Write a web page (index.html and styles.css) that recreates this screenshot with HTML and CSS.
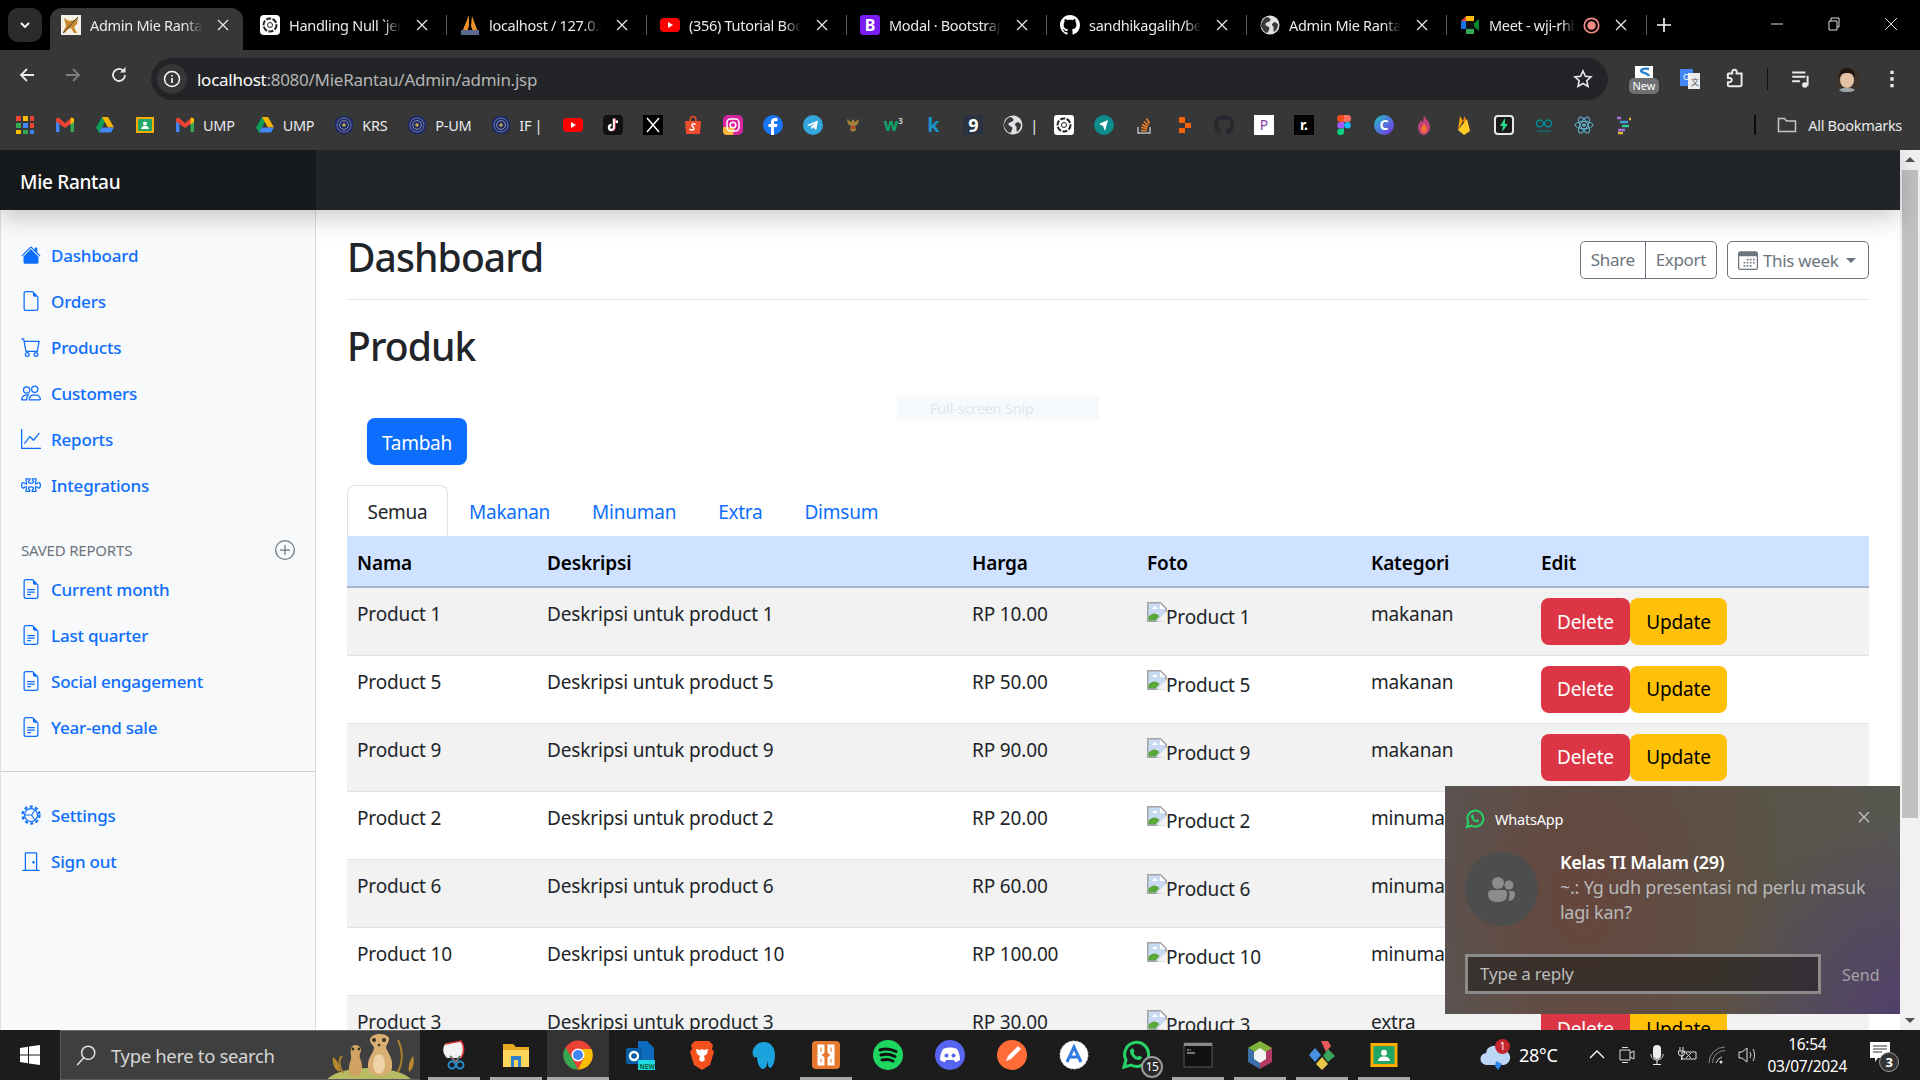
FILE: index.html
```html
<!DOCTYPE html>
<html>
  <head>
    <meta name="viewport" content="width=device-width, initial-scale=1.0">
    <title>Admin Mie Rantau</title>
    <link rel="stylesheet" href="styles.css">
  </head>
  <body>
    <svg class="defs">
      <symbol id="i-house" viewBox="0 0 16 16"><path d="M8.707 1.5a1 1 0 0 0-1.414 0L.646 8.146a.5.5 0 0 0 .708.708L8 2.207l6.646 6.647a.5.5 0 0 0 .708-.708L13 5.793V2.5a.5.5 0 0 0-.5-.5h-1a.5.5 0 0 0-.5.5v1.293L8.707 1.5Z"/><path d="m8 3.293 6 6V13.5a1.5 1.5 0 0 1-1.5 1.5h-9A1.5 1.5 0 0 1 2 13.5V9.293l6-6Z"/></symbol>
      <symbol id="i-file" viewBox="0 0 16 16"><path d="M14 4.5V14a2 2 0 0 1-2 2H4a2 2 0 0 1-2-2V2a2 2 0 0 1 2-2h5.5L14 4.5zm-3 0A1.5 1.5 0 0 1 9.5 3V1H4a1 1 0 0 0-1 1v12a1 1 0 0 0 1 1h8a1 1 0 0 0 1-1V4.5h-2z"/></symbol>
      <symbol id="i-cart" viewBox="0 0 16 16"><path d="M0 1.5A.5.5 0 0 1 .5 1H2a.5.5 0 0 1 .485.379L2.89 3H14.5a.5.5 0 0 1 .491.592l-1.5 8A.5.5 0 0 1 13 12H4a.5.5 0 0 1-.491-.408L2.01 3.607 1.61 2H.5a.5.5 0 0 1-.5-.5zM3.102 4l1.313 7h8.17l1.313-7H3.102zM5 12a2 2 0 1 0 0 4 2 2 0 0 0 0-4zm7 0a2 2 0 1 0 0 4 2 2 0 0 0 0-4zm-7 1a1 1 0 1 1 0 2 1 1 0 0 1 0-2zm7 0a1 1 0 1 1 0 2 1 1 0 0 1 0-2z"/></symbol>
      <symbol id="i-people" viewBox="0 0 16 16"><path d="M15 14s1 0 1-1-1-4-5-4-5 3-5 4 1 1 1 1h8Zm-7.978-1A.261.261 0 0 1 7 12.996c.001-.264.167-1.03.76-1.72C8.312 10.629 9.282 10 11 10c1.717 0 2.687.63 3.24 1.276.593.69.758 1.457.76 1.72l-.008.002a.274.274 0 0 1-.014.002H7.022ZM11 7a2 2 0 1 0 0-4 2 2 0 0 0 0 4Zm3-2a3 3 0 1 1-6 0 3 3 0 0 1 6 0ZM6.936 9.28a5.88 5.88 0 0 0-1.23-.247A7.35 7.35 0 0 0 5 9c-4 0-5 3-5 4 0 .667.333 1 1 1h4.216A2.238 2.238 0 0 1 5 13c0-1.01.377-2.042 1.09-2.904.243-.294.526-.569.846-.816ZM4.92 10A5.493 5.493 0 0 0 4 13H1c0-.26.164-1.03.76-1.724.545-.636 1.492-1.256 3.16-1.275ZM1.5 5.5a3 3 0 1 1 6 0 3 3 0 0 1-6 0Zm3-2a2 2 0 1 0 0 4 2 2 0 0 0 0-4Z"/></symbol>
      <symbol id="i-graph" viewBox="0 0 16 16"><path d="M0 0h1v15h15v1H0V0Zm14.817 3.113a.5.5 0 0 1 .07.704l-4.5 5.5a.5.5 0 0 1-.74.037L7.06 6.767l-3.656 5.027a.5.5 0 0 1-.808-.588l4-5.5a.5.5 0 0 1 .758-.06l2.609 2.61 4.15-5.073a.5.5 0 0 1 .704-.07Z"/></symbol>
      <symbol id="i-puzzle" viewBox="0 0 16 16"><path fill="none" stroke="currentColor" stroke-width="1" d="M4 3h3v.6c0 .9-1 1-1 1.700 0 .7 1 1.200 2 1.200s2-.5 2-1.200c0-.7-1-.8-1-1.700V3h3l-.4 4h.9c.7 0 .9-1 1.700-1 .8 0 1.300 1 1.300 2.200s-.5 2.200-1.300 2.200c-.8 0-1-1-1.700-1h-.9l.4 3.600H9v-.6c0-.9 1-1 1-1.700 0-.7-1-1.200-2-1.200s-2 .5-2 1.200c0 .7 1 .8 1 1.700v.6H4l.4-3.600h-.9c-.7 0-.9 1-1.700 1-.8 0-1.300-1-1.300-2.200S1 6 1.800 6c.8 0 1 1 1.700 1h.9L4 3Z"/></symbol>
      <symbol id="i-filetext" viewBox="0 0 16 16"><path d="M5 8h6v1H5zM5 10h6v1H5zM5 12h3v1H5z"/><path d="M14 4.5V14a2 2 0 0 1-2 2H4a2 2 0 0 1-2-2V2a2 2 0 0 1 2-2h5.5L14 4.5zm-3 0A1.5 1.5 0 0 1 9.5 3V1H4a1 1 0 0 0-1 1v12a1 1 0 0 0 1 1h8a1 1 0 0 0 1-1V4.5h-2z"/></symbol>
      <symbol id="i-gear" viewBox="0 0 16 16"><circle cx="8" cy="8" r="6.800" fill="none" stroke="currentColor" stroke-width="1.800" stroke-dasharray="2.400 2"/><circle cx="8" cy="8" r="5.200" fill="none" stroke="currentColor" stroke-width="1"/><path fill="none" stroke="currentColor" stroke-width=".9" d="M3 8h5.500L11 4.200M8.500 8l2.500 3.800"/></symbol>
      <symbol id="i-door" viewBox="0 0 16 16"><path d="M3 2a1 1 0 0 1 1-1h8a1 1 0 0 1 1 1v13h1.5a.5.5 0 0 1 0 1h-13a.5.5 0 0 1 0-1H3V2zm1 13h8V2H4v13z"/><path d="M9 9a1 1 0 1 0 2 0 1 1 0 0 0-2 0z"/></symbol>
      <symbol id="i-seal" viewBox="0 0 20 20"><circle cx="10" cy="10" r="9.500" fill="#1d2a63"/><circle cx="10" cy="10" r="7" fill="none" stroke="#6d76a8" stroke-width="1"/><circle cx="10" cy="10" r="4.400" fill="none" stroke="#8d90b0" stroke-width="1"/><circle cx="10" cy="10" r="1.800" fill="#c5a94a"/></symbol>
      <symbol id="i-gmail" viewBox="0 0 20 20"><path fill="#4285f4" d="M1 5v12h3.500V9z"/><path fill="#34a853" d="M15.500 9v8H19V5z"/><path fill="#ea4335" d="M1 3.500v3l9 6.500 9-6.500v-3l-2.500-1L10 8 3.500 2.500z"/><path fill="#fbbc04" d="M16.500 2.500 19 3.500V7l-3.500 2.500V4z"/></symbol>
      <symbol id="i-drive" viewBox="0 0 20 20"><path fill="#0f9d58" d="M7 2 1 12.500l3 5L10 7z"/><path fill="#f4b400" d="M7 2h6l6 10.500h-6z"/><path fill="#4285f4" d="M6.500 12.500H19l-3 5H4z"/></symbol>
      <symbol id="i-classroom" viewBox="0 0 20 20"><rect x="1" y="2" width="18" height="16" fill="#f9ab00"/><rect x="3" y="4" width="14" height="12" fill="#22a565"/><circle cx="10" cy="8.500" r="2" fill="#fff"/><path fill="#fff" d="M6 14c.5-2.500 2-3 4-3s3.500.5 4 3z"/></symbol>
      <symbol id="i-yt" viewBox="0 0 20 20"><rect y="3" width="20" height="14" rx="4" fill="#f00"/><path fill="#fff" d="m8 7 5 3-5 3z"/></symbol>
      <symbol id="i-globe" viewBox="0 0 20 20"><circle cx="10" cy="10" r="9.500" fill="#dfe1e5"/><path fill="#3a3a3a" d="M7 2c3 1 4 2 3 4-1 1-3 1-4 2-2 2 1 3 3 4 1 1 0 4-2 6-3-1-5-4-6-7 0-4 3-8 6-9zm8 5 3 2c0 3-1 6-4 8-1-3 0-5-1-6-2-1-1-3 2-4z"/></symbol>
      <symbol id="i-x" viewBox="0 0 14 14"><path stroke="currentColor" stroke-width="1.300" d="m2 2 10 10M12 2 2 12"/></symbol>
      <symbol id="i-broken" viewBox="0 0 20 20"><path fill="#c9daf3" stroke="#a3a3a3" stroke-width="1.500" d="M.8.800h12.600l5.800 5.800v12.600H.8z"/><path fill="#fff" d="M13 1.500V7h5.500z"/><path fill="#fff" d="M5 7l3-3 3 3z"/><path fill="#5aa83a" d="M1.500 18.500V15c3-4 7-5 11-1l-4 4.500z"/><path fill="#f2f2f2" d="M9.500 19.500 20 9v11z"/></symbol>
    </svg>

    <div class="shell">
      <!-- browser -->
      <div class="tabstrip">
        <div class="tab-menu"><svg class="ico14" viewBox="0 0 14 14"><path fill="none" stroke="#fff" stroke-width="1.800" d="m3 5 4 4 4-4"/></svg></div>
        <div class="tab active">
          <svg class="favicon" viewBox="0 0 20 20"><rect width="20" height="20" fill="#f4f1e4"/><path fill="#c98a2e" d="M3 3l5 3 5-1 4-2-1 6-3 3 3 6h-3l-3-5-4 2-2 3-2-1 3-6z"/><path stroke="#444" d="M2 18 17 2"/></svg>
          <span class="tab-title">Admin Mie Rantau</span>
          <svg class="ico14 tab-x"><use href="#i-x"/></svg>
        </div>
        <div class="tab">
          <svg class="favicon" viewBox="0 0 20 20"><rect width="20" height="20" rx="4" fill="#fff"/><circle cx="10" cy="10" r="6.500" fill="none" stroke="#222" stroke-width="2" stroke-dasharray="5 1.500"/><circle cx="10" cy="10" r="2.500" fill="none" stroke="#222"/></svg>
          <span class="tab-title">Handling Null `jenis</span>
          <svg class="ico14 tab-x"><use href="#i-x"/></svg>
        </div>
        <div class="tab">
          <svg class="favicon" viewBox="0 0 20 20"><path fill="#e8912d" d="M9 0 2 17h5l2-6zM12 1l-1 10 2 6h5z"/><rect x="1" y="15" width="18" height="5" fill="#5a6a8c"/></svg>
          <span class="tab-title">localhost / 127.0.0.1</span>
          <svg class="ico14 tab-x"><use href="#i-x"/></svg>
        </div>
        <div class="tab">
          <svg class="favicon"><use href="#i-yt"/></svg>
          <span class="tab-title">(356) Tutorial Boots</span>
          <svg class="ico14 tab-x"><use href="#i-x"/></svg>
        </div>
        <div class="tab">
          <span class="favicon letter-b">B</span>
          <span class="tab-title">Modal · Bootstrap</span>
          <svg class="ico14 tab-x"><use href="#i-x"/></svg>
        </div>
        <div class="tab">
          <svg class="favicon" viewBox="0 0 16 16"><path fill="#fff" d="M8 0C3.580 0 0 3.580 0 8c0 3.540 2.290 6.530 5.470 7.590.4.070.55-.17.55-.38 0-.19-.01-.82-.01-1.490-2.010.37-2.530-.49-2.690-.94-.09-.23-.48-.94-.82-1.130-.28-.15-.68-.52-.01-.53.63-.01 1.080.58 1.230.82.720 1.210 1.870.87 2.330.66.070-.52.280-.87.510-1.070-1.780-.2-3.640-.89-3.640-3.950 0-.87.310-1.590.820-2.150-.080-.2-.360-1.020.080-2.120 0 0 .670-.210 2.200.820.640-.180 1.320-.270 2-.270s1.360.090 2 .270c1.530-1.040 2.200-.820 2.200-.820.440 1.100.160 1.920.080 2.120.510.560.820 1.270.820 2.150 0 3.070-1.870 3.750-3.650 3.950.290.250.540.730.540 1.480 0 1.070-.010 1.930-.010 2.200 0 .210.150.460.550.380A8.010 8.010 0 0 0 16 8c0-4.420-3.580-8-8-8z"/></svg>
          <span class="tab-title">sandhikagalih/belajar</span>
          <svg class="ico14 tab-x"><use href="#i-x"/></svg>
        </div>
        <div class="tab">
          <svg class="favicon"><use href="#i-globe"/></svg>
          <span class="tab-title">Admin Mie Rantau</span>
          <svg class="ico14 tab-x"><use href="#i-x"/></svg>
        </div>
        <div class="tab tab-last">
          <svg class="favicon" viewBox="0 0 20 20"><path fill="#fbbc04" d="M1 6h5V1h8v5H1z"/><path fill="#1a73e8" d="M1 6h5v8H1z"/><path fill="#34a853" d="M6 14h8v5H6z"/><path fill="#ea4335" d="M6 1v5H1z"/><path fill="#111" d="M6 6h8v8H6z"/><path fill="#00832d" d="m14 8 5-4v12l-5-4z"/></svg>
          <span class="tab-title tab-short">Meet - wji-rhbx</span>
          <svg class="rec" viewBox="0 0 20 20"><circle cx="10" cy="10" r="8.500" fill="none" stroke="#f28b82" stroke-width="2"/><circle cx="10" cy="10" r="5" fill="#f28b82"/></svg>
          <svg class="ico14 tab-x"><use href="#i-x"/></svg>
        </div>
        <svg class="tab-plus" viewBox="0 0 14 14"><path stroke="#fff" stroke-width="1.600" d="M7 0v14M0 7h14"/></svg>
        <div class="win-ctrl">
          <svg class="ico14" viewBox="0 0 14 14"><path stroke="#ddd" d="M1 7h12"/></svg>
          <svg class="ico14" viewBox="0 0 14 14"><path fill="none" stroke="#ddd" d="M2 4h8v9H2zM4 4V1h8v9h-2"/></svg>
          <svg class="ico14" viewBox="0 0 14 14"><path stroke="#ddd" d="m1 1 12 12M13 1 1 13"/></svg>
        </div>
      </div>

      <div class="toolbar">
        <svg class="nav-ico" viewBox="0 0 20 20"><path fill="none" stroke="#e8eaed" stroke-width="1.800" d="M17 10H4m6-6-6 6 6 6"/></svg>
        <svg class="nav-ico" viewBox="0 0 20 20"><path fill="none" stroke="#7c7c7c" stroke-width="1.800" d="M3 10h13m-6-6 6 6-6 6"/></svg>
        <svg class="nav-ico" viewBox="0 0 20 20"><path fill="none" stroke="#e8eaed" stroke-width="1.800" d="M16 10a6 6 0 1 1-2-4.500"/><path fill="#e8eaed" d="M16.500 2v5.500H11z"/></svg>
        <div class="omnibox">
          <span class="info-btn"><svg class="ico20" viewBox="0 0 20 20"><circle cx="10" cy="10" r="7.500" fill="none" stroke="#fff" stroke-width="1.500"/><path stroke="#fff" stroke-width="1.600" d="M10 9v5M10 6v1.500"/></svg></span>
          <span class="url"><b>localhost</b>:8080/MieRantau/Admin/admin.jsp</span>
          <svg class="star" viewBox="0 0 20 20"><path fill="none" stroke="#e8eaed" stroke-width="1.600" d="m10 2 2.400 5.300 5.600.6-4.200 3.800 1.200 5.700L10 14.500l-5 2.900 1.200-5.700L2 7.900l5.600-.6z"/></svg>
        </div>
        <div class="ext-new">
          <svg class="ico20" viewBox="0 0 20 20"><rect x="1" y="1" width="18" height="14" fill="#fff"/><path fill="none" stroke="#2a7fc9" stroke-width="2.400" d="M15 4c-4-1-8 0-8 2s6 1 8 5"/></svg>
          <span class="new-tag">New</span>
        </div>
        <svg class="ext-ico ext-tr" viewBox="0 0 22 22"><rect x="1" y="1" width="13" height="17" rx="1" fill="#4285f4"/><rect x="9" y="5" width="12" height="16" fill="#e8eaed"/><text x="4" y="12" class="svg-g">G</text><text x="12" y="17" class="svg-x">文</text></svg>
        <svg class="ext-ico" viewBox="0 0 20 20"><path fill="none" stroke="#e8eaed" stroke-width="1.800" d="M4 5h3.500V3.500a2 2 0 0 1 4 0V5H16v10.500a1 1 0 0 1-1 1H4.500a1 1 0 0 1-1-1V13H5a2 2 0 0 0 0-4H3.500V6z"/></svg>
        <span class="tool-sep"></span>
        <svg class="ext-ico" viewBox="0 0 20 20"><path stroke="#e8eaed" stroke-width="1.800" d="M2 4h12M2 8h12M2 12h7"/><path fill="none" stroke="#e8eaed" stroke-width="1.800" d="M16 7v9"/><circle cx="13.500" cy="15.500" r="2.500" fill="#e8eaed"/></svg>
        <svg class="avatar" viewBox="0 0 26 26"><circle cx="13" cy="13" r="13" fill="#3d332c"/><ellipse cx="13" cy="14" rx="7" ry="8" fill="#e3c2a4"/><path fill="#1f1611" d="M5 13C4 5 9 2 13 2s9 3 8 11c-1-4-3-6-8-6s-7 2-8 6z"/><path fill="#9aa3a8" d="M5 24c3-3 13-3 16 0-4 3-12 3-16 0z"/></svg>
        <svg class="ext-ico" viewBox="0 0 20 20"><path fill="#e8eaed" d="M8.500 2.500h3v3h-3zM8.500 8.500h3v3h-3zM8.500 14.500h3v3h-3z"/></svg>
      </div>

      <div class="bookmarks">
        <svg class="bm-ico bm-first" viewBox="0 0 20 20"><path fill="#ea4335" d="M1 1h5v5H1z"/><path fill="#fbbc04" d="M8 1h5v5H8z"/><path fill="#ea4335" d="M15 1h4v5h-4z"/><path fill="#34a853" d="M1 8h5v5H1z"/><path fill="#4285f4" d="M8 8h5v5H8z"/><path fill="#ea4335" d="M15 8h4v5h-4z"/><path fill="#fbbc04" d="M1 15h5v4H1z"/><path fill="#34a853" d="M8 15h5v4H8z"/><path fill="#4285f4" d="M15 15h4v4h-4z"/></svg>
        <svg class="bm-ico"><use href="#i-gmail"/></svg>
        <svg class="bm-ico"><use href="#i-drive"/></svg>
        <svg class="bm-ico"><use href="#i-classroom"/></svg>
        <span class="bm-named"><svg class="ico20"><use href="#i-gmail"/></svg>UMP</span>
        <span class="bm-named"><svg class="ico20"><use href="#i-drive"/></svg>UMP</span>
        <span class="bm-named"><svg class="ico20"><use href="#i-seal"/></svg>KRS</span>
        <span class="bm-named"><svg class="ico20"><use href="#i-seal"/></svg>P-UM</span>
        <span class="bm-named bm-if"><svg class="ico20"><use href="#i-seal"/></svg>IF |</span>
        <svg class="bm-ico"><use href="#i-yt"/></svg>
        <svg class="bm-ico" viewBox="0 0 20 20"><rect width="20" height="20" rx="4" fill="#111"/><path fill="none" stroke="#fff" stroke-width="2.400" d="M11 3.500v9a2.500 2.500 0 1 1-2.500-2.500M11 4c.5 2 2 3 4 3"/><path fill="none" stroke="#fe2c55" stroke-width=".8" d="M12.300 3.500v9.500a3 3 0 0 1-3 2.800"/></svg>
        <svg class="bm-ico" viewBox="0 0 20 20"><rect width="20" height="20" fill="#000"/><path stroke="#fff" stroke-width="1.500" d="m4 3 12 14M16 3 4 17"/></svg>
        <svg class="bm-ico" viewBox="0 0 20 20"><path fill="#ee4d2d" d="M2 6h16l-1 13H3z"/><path fill="none" stroke="#ee4d2d" stroke-width="1.500" d="M7 6c0-6 6-6 6 0"/><path fill="none" stroke="#fff" stroke-width="1.500" d="M12.500 9.500c-2-1.500-5 0-3 2s2 3 0 3.500c-1 .2-2 0-3-1"/></svg>
        <svg class="bm-ico" viewBox="0 0 20 20"><rect width="20" height="20" rx="5" fill="#d6249f"/><path fill="#fdb93c" d="M0 12h12l-2 8H4a4 4 0 0 1-4-4z"/><rect x="4" y="4" width="12" height="12" rx="3.500" fill="none" stroke="#fff" stroke-width="1.500"/><circle cx="10" cy="10" r="2.800" fill="none" stroke="#fff" stroke-width="1.500"/></svg>
        <svg class="bm-ico" viewBox="0 0 20 20"><circle cx="10" cy="10" r="10" fill="#1877f2"/><path fill="#fff" d="M11 20v-8h3l.5-3H11V7.500C11 6.500 11.500 6 12.500 6H14.500V3.200C12 2.700 8 2.800 8 7v2H5.500v3H8v8z"/></svg>
        <svg class="bm-ico" viewBox="0 0 20 20"><circle cx="10" cy="10" r="10" fill="#34a5dd"/><path fill="#fff" d="M4 10l11-4.500-1.800 9.500-3.200-2.400L8.300 14.300 8 11.500l5-4-6.500 3.500z"/></svg>
        <svg class="bm-ico" viewBox="0 0 20 20"><path fill="#a5823a" d="M10 4l2 3 4-3-1 5-3 2 1 4-3 2-3-2 1-4-3-2-1-5 4 3z"/><path fill="#c0392b" d="M8.500 11h3v3h-3z"/></svg>
        <span class="bm-letter bm-w">w<sup>3</sup></span>
        <span class="bm-letter bm-k">k</span>
        <span class="bm-letter bm-nine">9</span>
        <span class="bm-globe"><svg class="ico20"><use href="#i-globe"/></svg>|</span>
        <svg class="bm-ico" viewBox="0 0 20 20"><rect width="20" height="20" rx="3" fill="#fff"/><circle cx="10" cy="10" r="6.500" fill="none" stroke="#222" stroke-width="2" stroke-dasharray="5 1.500"/><circle cx="10" cy="10" r="2.500" fill="none" stroke="#222"/></svg>
        <svg class="bm-ico" viewBox="0 0 20 20"><circle cx="10" cy="10" r="10" fill="#0f8c8c"/><path fill="#fff" d="M5 9l9-4-3 11-2-5z"/></svg>
        <svg class="bm-ico" viewBox="0 0 20 20"><path fill="none" stroke="#bcbbbb" stroke-width="1.500" d="M4 12v6h12v-6"/><path stroke="#f48024" stroke-width="1.600" d="M7 15.500h6M7.200 12.500l6 1M8 9.500l5.500 2.500M10 6.500l4.500 4M12.500 3.500l3 5"/></svg>
        <svg class="bm-ico" viewBox="0 0 20 20"><path fill="#f26207" d="M5 2h6v6H5zM11 8h6v5h-6zM5 13h6v5H5z"/></svg>
        <svg class="bm-ico" viewBox="0 0 16 16"><path fill="#24292f" d="M8 0C3.580 0 0 3.580 0 8c0 3.540 2.290 6.530 5.470 7.590.4.070.55-.17.55-.38 0-.19-.01-.82-.01-1.490-2.010.37-2.530-.49-2.690-.94-.09-.23-.48-.94-.82-1.130-.28-.15-.68-.52-.01-.53.63-.01 1.080.58 1.230.82.720 1.210 1.870.87 2.330.66.070-.52.280-.87.510-1.070-1.780-.2-3.640-.89-3.640-3.950 0-.87.310-1.590.820-2.150-.080-.2-.360-1.020.080-2.120 0 0 .670-.210 2.200.820.640-.180 1.320-.270 2-.270s1.360.090 2 .270c1.530-1.040 2.200-.820 2.200-.820.440 1.100.160 1.920.080 2.120.510.560.820 1.270.820 2.150 0 3.070-1.870 3.750-3.650 3.950.290.250.540.730.540 1.480 0 1.070-.010 1.930-.010 2.200 0 .210.150.460.550.380A8.010 8.010 0 0 0 16 8c0-4.420-3.580-8-8-8z"/></svg>
        <span class="bm-letter bm-p">P</span>
        <span class="bm-letter bm-r">r.</span>
        <svg class="bm-ico" viewBox="0 0 20 20"><path fill="#f24e1e" d="M6 0h4v7H6.500a3.500 3.500 0 0 1 0-7z"/><path fill="#ff7262" d="M10 0h3.500a3.500 3.500 0 0 1 0 7H10z"/><path fill="#a259ff" d="M6.500 7H10v6.500H6.500a3.200 3.200 0 0 1 0-6.500z"/><circle cx="13.500" cy="10.200" r="3.300" fill="#1abcfe"/><path fill="#0acf83" d="M6.500 13.500H10V17a3.400 3.400 0 1 1-3.500-3.500z"/></svg>
        <span class="bm-letter bm-c">C</span>
        <svg class="bm-ico" viewBox="0 0 20 20"><path fill="#c2417a" d="M10 0c1 4 6 6 6 12 0 4-3 8-6 8s-6-3-6-8c0-3 2-4 3-7 1 1 1 2 1 3 1-2 2-5 2-8z"/><path fill="#f3722c" d="M10 8c1 2 3 4 3 6s-1 4-3 4-3-2-3-4 2-3 3-6z"/></svg>
        <svg class="bm-ico" viewBox="0 0 20 20"><path fill="#ffa000" d="m4 15 2-14 3 5z"/><path fill="#f57f17" d="M9 6 10.500 1 15 12z"/><path fill="#ffca28" d="M4 15 13 4l3 12-6 4z"/></svg>
        <svg class="bm-ico" viewBox="0 0 20 20"><rect x="1" y="1" width="18" height="18" rx="3" fill="#1a1a1a" stroke="#e8e8e8" stroke-width="2"/><path fill="#2bd98c" d="m11 3-5 8h3l-1 6 6-8h-3z"/></svg>
        <svg class="bm-ico" viewBox="0 0 20 20"><path fill="none" stroke="#00878f" stroke-width="1.600" d="M6 5a3.500 3.500 0 1 0 0 7c3 0 5-7 8-7a3.500 3.500 0 1 1 0 7c-3 0-5-7-8-7z"/><path stroke="#00878f" d="M3 16h14"/></svg>
        <svg class="bm-ico" viewBox="0 0 20 20"><g fill="none" stroke="#61b8d8"><ellipse cx="10" cy="10" rx="9" ry="3.600"/><ellipse cx="10" cy="10" rx="9" ry="3.600" transform="rotate(60 10 10)"/><ellipse cx="10" cy="10" rx="9" ry="3.600" transform="rotate(120 10 10)"/></g><circle cx="10" cy="10" r="1.800" fill="#61b8d8"/></svg>
        <svg class="bm-ico" viewBox="0 0 20 20"><path stroke-width="2.400" stroke="#a86bdc" d="M3 3h4M4 15h7"/><path stroke-width="2.400" stroke="#4a9ee0" d="M6 7h8"/><path stroke-width="2.400" stroke="#37c99a" d="M8 11h7"/><path stroke-width="2.400" stroke="#e8b93a" d="M4 18h5M15 4h2"/></svg>
        <span class="bm-sep"></span>
        <span class="bm-all"><svg class="ico20" viewBox="0 0 20 20"><path fill="none" stroke="#c4c7c5" stroke-width="1.500" d="M1.500 3.500h6l2 2.500h9v10.500h-17z"/></svg>All Bookmarks</span>
      </div>

      <!-- page -->
      <div class="page">
        <div class="site">
          <nav class="navbar"><div class="brand">Mie Rantau</div></nav>
          <div class="site-body">
            <aside class="sidebar">
              <ul class="side-nav">
                <li><svg class="side-ico"><use href="#i-house"/></svg>Dashboard</li>
                <li><svg class="side-ico"><use href="#i-file"/></svg>Orders</li>
                <li><svg class="side-ico"><use href="#i-cart"/></svg>Products</li>
                <li><svg class="side-ico"><use href="#i-people"/></svg>Customers</li>
                <li><svg class="side-ico"><use href="#i-graph"/></svg>Reports</li>
                <li><svg class="side-ico"><use href="#i-puzzle"/></svg>Integrations</li>
              </ul>
              <div class="side-heading">
                <span>SAVED REPORTS</span>
                <svg class="ico20" viewBox="0 0 16 16"><circle cx="8" cy="8" r="7.500" fill="none" stroke="#6c757d"/><path stroke="#6c757d" d="M8 4v8M4 8h8"/></svg>
              </div>
              <ul class="side-nav">
                <li><svg class="side-ico"><use href="#i-filetext"/></svg>Current month</li>
                <li><svg class="side-ico"><use href="#i-filetext"/></svg>Last quarter</li>
                <li><svg class="side-ico"><use href="#i-filetext"/></svg>Social engagement</li>
                <li><svg class="side-ico"><use href="#i-filetext"/></svg>Year-end sale</li>
              </ul>
              <hr class="side-line">
              <ul class="side-nav">
                <li><svg class="side-ico"><use href="#i-gear"/></svg>Settings</li>
                <li><svg class="side-ico"><use href="#i-door"/></svg>Sign out</li>
              </ul>
            </aside>
            <main class="main">
              <div class="head">
                <h1>Dashboard</h1>
                <div class="head-btns">
                  <div class="btn-group"><span class="btn-line">Share</span><span class="btn-line">Export</span></div>
                  <span class="btn-week">
                    <svg class="ico20" viewBox="0 0 16 16"><path fill="#6c757d" d="M0 3a2 2 0 0 1 2-2h12a2 2 0 0 1 2 2v11a2 2 0 0 1-2 2H2a2 2 0 0 1-2-2zm1 2v9a1 1 0 0 0 1 1h12a1 1 0 0 0 1-1V5z"/><path fill="#6c757d" d="M7 7h1.300v1.300H7zM9.500 7h1.300v1.300H9.500zM12 7h1.300v1.300H12zM4.500 9.500h1.300v1.300H4.500zM7 9.500h1.300v1.300H7zM9.500 9.500h1.300v1.300H9.500zM12 9.500h1.300v1.300H12zM4.500 12h1.300v1.300H4.500zM7 12h1.300v1.300H7zM9.500 12h1.300v1.300H9.500z"/></svg>
                    This week<i class="caret"></i>
                  </span>
                </div>
              </div>
              <h2>Produk</h2>
              <button class="btn-add">Tambah</button>
              <ul class="tabs">
                <li class="on">Semua</li>
                <li>Makanan</li>
                <li>Minuman</li>
                <li>Extra</li>
                <li>Dimsum</li>
              </ul>
              <table class="produk">
                <colgroup><col class="c1"><col class="c2"><col class="c3"><col class="c4"><col class="c5"><col></colgroup>
                <thead>
                  <tr><th>Nama</th><th>Deskripsi</th><th>Harga</th><th>Foto</th><th>Kategori</th><th>Edit</th></tr>
                </thead>
                <tbody>
                  <tr><td>Product 1</td><td>Deskripsi untuk product 1</td><td>RP 10.00</td><td class="foto"><svg class="broken"><use href="#i-broken"/></svg>Product 1</td><td>makanan</td><td><button class="btn-del">Delete</button><button class="btn-upd">Update</button></td></tr>
                  <tr><td>Product 5</td><td>Deskripsi untuk product 5</td><td>RP 50.00</td><td class="foto"><svg class="broken"><use href="#i-broken"/></svg>Product 5</td><td>makanan</td><td><button class="btn-del">Delete</button><button class="btn-upd">Update</button></td></tr>
                  <tr><td>Product 9</td><td>Deskripsi untuk product 9</td><td>RP 90.00</td><td class="foto"><svg class="broken"><use href="#i-broken"/></svg>Product 9</td><td>makanan</td><td><button class="btn-del">Delete</button><button class="btn-upd">Update</button></td></tr>
                  <tr><td>Product 2</td><td>Deskripsi untuk product 2</td><td>RP 20.00</td><td class="foto"><svg class="broken"><use href="#i-broken"/></svg>Product 2</td><td>minuman</td><td><button class="btn-del">Delete</button><button class="btn-upd">Update</button></td></tr>
                  <tr><td>Product 6</td><td>Deskripsi untuk product 6</td><td>RP 60.00</td><td class="foto"><svg class="broken"><use href="#i-broken"/></svg>Product 6</td><td>minuman</td><td><button class="btn-del">Delete</button><button class="btn-upd">Update</button></td></tr>
                  <tr><td>Product 10</td><td>Deskripsi untuk product 10</td><td>RP 100.00</td><td class="foto"><svg class="broken"><use href="#i-broken"/></svg>Product 10</td><td>minuman</td><td><button class="btn-del">Delete</button><button class="btn-upd">Update</button></td></tr>
                  <tr><td>Product 3</td><td>Deskripsi untuk product 3</td><td>RP 30.00</td><td class="foto"><svg class="broken"><use href="#i-broken"/></svg>Product 3</td><td>extra</td><td><button class="btn-del">Delete</button><button class="btn-upd">Update</button></td></tr>
                </tbody>
              </table>
            </main>
            <div class="snip">Full-screen Snip</div>
          </div>
        </div>
        <div class="scrollbar">
          <i class="arrow-up"></i>
          <div class="thumb"></div>
          <i class="arrow-down"></i>
        </div>
      </div>

      <!-- taskbar -->
      <div class="taskbar">
        <div class="tb-start"><svg class="ico20" viewBox="0 0 20 20"><path fill="#fff" d="M0 3l8-1.200V9.500H0zM9 1.600 20 0v9.500H9zM0 10.500h8v7.700L0 17zM9 10.500h11V20L9 18.400z"/></svg></div>
        <div class="tb-search">
          <svg class="search-ico" viewBox="0 0 20 20"><circle cx="12" cy="8" r="6" fill="none" stroke="#ddd" stroke-width="1.400"/><path stroke="#ddd" stroke-width="1.400" d="M8 12.500 2 19"/></svg>
          <span>Type here to search</span>
          <svg class="meerkat" viewBox="0 0 95 50">
            <ellipse cx="44" cy="54" rx="44" ry="16" fill="#b7bb62"/>
            <path fill="none" stroke="#a8802c" stroke-width="2" d="M17 26c-4 4-3 10 1 17M73 10c5 10 5 22 0 32"/>
            <path fill="#b98a2e" d="M8 27c4 3 7 8 7 15-5-2-8-7-7-15zM88 26c-3 4-5 9-4 16 4-3 6-9 4-16z"/>
            <path fill="#cfa264" d="M30 15c4 0 7 3 6 6-1 3-2 4-1 7 2 5 3 10 1 15 0 2-2 3-5 3-5 0-8-2-7-8 0-6 3-8 2-13-1-4 0-10 4-10z"/>
            <path fill="#d8ae72" d="M55 4c6 0 10 3 9 6-1 4-3 5-3 8 3 6 7 11 6 19 0 5-5 9-12 9-8 0-13-4-12-11 0-8 5-11 6-17 0-3-5-5-4-9 1-3 5-5 10-5z"/>
            <ellipse cx="54" cy="34" rx="6" ry="10" fill="#edd3a5"/>
            <circle cx="49" cy="10" r="2" fill="#332"/><circle cx="59" cy="10" r="2" fill="#332"/><circle cx="54" cy="15" r="1.300" fill="#332"/>
            <circle cx="28" cy="19" r="1.400" fill="#332"/><circle cx="34" cy="19" r="1.400" fill="#332"/>
          </svg>
        </div>
        <div class="tb-apps">
          <div class="tb-app run"><svg class="app-ico" viewBox="0 0 30 30"><path fill="#f2f2f2" d="M6 4 22 1c4 6 3 12 0 17L8 18C4 14 3 9 6 4z"/><path fill="none" stroke="#d9322e" stroke-width="1.500" d="M6 4 22 1c4 6 3 12 0 17"/><circle cx="13" cy="25" r="3.500" fill="none" stroke="#2a8bc9" stroke-width="2"/><circle cx="21" cy="25" r="3.500" fill="none" stroke="#2a8bc9" stroke-width="2"/><path stroke="#777" stroke-width="2" d="m11 16 6 6M21 16l-4 6"/></svg></div>
          <div class="tb-app run"><svg class="app-ico" viewBox="0 0 30 30"><path fill="#e8a923" d="M2 4h10l3 3h13v20H2z"/><path fill="#ffd65a" d="M2 10h26v17H2z"/><path fill="#2f80c9" d="M10 27V16h10v11h-3v-7h-4v7z"/></svg></div>
          <div class="tb-app on-app"><svg class="app-ico" viewBox="0 0 30 30"><circle cx="15" cy="15" r="14.500" fill="#ea4335"/><path fill="#fbbc04" d="M15 9h13.500A14.500 14.500 0 0 1 15 29.500L21 18z"/><path fill="#34a853" d="M15 29.500A14.500 14.500 0 0 1 2.500 7.500L9 18z"/><circle cx="15" cy="15" r="6.500" fill="#fff"/><circle cx="15" cy="15" r="5" fill="#4285f4"/></svg></div>
          <div class="tb-app"><svg class="app-ico" viewBox="0 0 30 30"><path fill="#0f6cbd" d="M13 1h9l7 7v12H13z"/><rect x="1" y="8" width="16" height="16" rx="2" fill="#0a5ea8"/><circle cx="9" cy="16" r="4" fill="none" stroke="#fff" stroke-width="2.400"/><rect x="13" y="20" width="17" height="10" fill="#20d9e3"/><text x="14.500" y="28.500" class="svg-new">NEW</text></svg></div>
          <div class="tb-app"><svg class="app-ico" viewBox="0 0 30 30"><path fill="#f4511e" d="M8 1h14l4 4-1 4 2 3-4 13-8 5-8-5L3 12l2-3-1-4z"/><path fill="#fff" d="M9 9l4 1 2-1 2 1 4-1-1 5-3 2 1 4-3 2-3-2 1-4-3-2z"/></svg></div>
          <div class="tb-app"><svg class="app-ico" viewBox="0 0 30 30"><path fill="#1aa3dd" d="M15 2c7 0 11 6 11 13 0 6-2 12-5 13-2 0-2-4-2-7-1 4-2 8-5 8s-6-6-6-12c-1 0-2 1-3 0C4 15 3 13 4 10 6 5 10 2 15 2z"/></svg></div>
          <div class="tb-app run"><svg class="app-ico" viewBox="0 0 30 30"><rect x="1" y="1" width="28" height="28" rx="4" fill="#e8772e"/><path fill="none" stroke="#fff" stroke-width="3" d="M8 6h4v6l-4 3 4 3v6H8zM22 6h-4v6l4 3-4 3v6h4z"/></svg></div>
          <div class="tb-app"><svg class="app-ico" viewBox="0 0 30 30"><circle cx="15" cy="15" r="15" fill="#1ed760"/><path fill="none" stroke="#111" stroke-linecap="round" stroke-width="3" d="M7 10c6-2 11-1 16 1.500M8 15c5-1.500 9-1 14 1.500M9 20c4-1 8-.5 11 1"/></svg></div>
          <div class="tb-app"><svg class="app-ico" viewBox="0 0 30 30"><circle cx="15" cy="15" r="15" fill="#5865f2"/><path fill="#fff" d="M8 9c4-2 10-2 14 0 2 3 3 7 3 11-2 1-3 2-5 2l-1-2h-8l-1 2c-2 0-3-1-5-2 0-4 1-8 3-11z"/><circle cx="11.500" cy="15.500" r="2" fill="#5865f2"/><circle cx="18.500" cy="15.500" r="2" fill="#5865f2"/></svg></div>
          <div class="tb-app"><svg class="app-ico" viewBox="0 0 30 30"><circle cx="15" cy="15" r="15" fill="#ff6c37"/><path fill="#fff" d="M21 6l3 3-10 10-5 2 2-5z"/></svg></div>
          <div class="tb-app"><svg class="app-ico" viewBox="0 0 30 30"><circle cx="15" cy="15" r="14" fill="#fff" stroke="#ddd" stroke-dasharray="2 2"/><path fill="none" stroke="#2f7de1" stroke-width="3" d="M8 22l7-15 7 15M11 17h8"/></svg></div>
          <div class="tb-app"><svg class="app-ico" viewBox="0 0 30 30"><path fill="none" stroke="#25d366" stroke-width="3" d="M3 27l2-7a12 12 0 1 1 5 5z"/><path fill="#25d366" d="M10 9c1-1 2-1 2.500 0l1 2.500-1 1.500c1 2 2.500 3 4 4l1.500-1.500 3 1.500c0 1.500-1 3-3 3-5 0-9-5-9-9 0-1 .5-1.500 1.500-2z"/></svg><span class="tb-count">15</span></div>
          <div class="tb-app run"><svg class="app-ico" viewBox="0 0 30 30"><rect x="1" y="3" width="28" height="24" fill="#111" stroke="#555"/><rect x="1" y="3" width="28" height="3" fill="#8a8a8a"/><path stroke="#ddd" d="M4 10h2M7 10h1M4 13h8"/></svg></div>
          <div class="tb-app run"><svg class="app-ico" viewBox="0 0 30 30"><path fill="#b23a64" d="M15 1l12 7v14l-12 7z"/><path fill="#7fb23a" d="M15 1 3 8l12 7 12-7z"/><path fill="#3d6fa8" d="M3 8l12 7v14L3 22z"/><path fill="#f3f3f3" d="M15 8l6 4v7l-6 4-6-4v-7z"/></svg></div>
          <div class="tb-app run"><svg class="app-ico" viewBox="0 0 30 30"><path fill="#e85a5a" d="M14 1h7l3 5-5 6z"/><path fill="#4a90e2" d="M8 8l6 7-6 7-6-7z"/><path fill="#3ba55d" d="M21 9l7 7-7 6-5-6z"/><path fill="#e9c84a" d="M9 24l6-7 6 7-6 6z"/></svg></div>
          <div class="tb-app run"><svg class="app-ico" viewBox="0 0 30 30"><use href="#i-classroom"/></svg></div>
        </div>
        <div class="tray">
          <div class="tray-weather">
            <svg class="cloud" viewBox="0 0 32 32"><path fill="#bcd6f5" d="M8 26a6 6 0 0 1-1-12 8 8 0 0 1 15-3 7 7 0 0 1 3 15z"/><path fill="#2a86e8" d="m17 22 6 3-4 6-3-4z"/></svg>
            <span class="weather-badge">1</span>
            <span>28°C</span>
          </div>
          <svg class="tray-ico" viewBox="0 0 20 20"><path fill="none" stroke="#fff" stroke-width="1.300" d="m3 13 7-7 7 7"/></svg>
          <svg class="tray-ico" viewBox="0 0 20 20"><path fill="none" stroke="#ddd" d="M3 5h10v10H3zM13 8l4-2v8l-4-2M5 2.500h6M5 17.500h6"/></svg>
          <svg class="tray-ico" viewBox="0 0 20 20"><rect x="6" y="0" width="8" height="14" rx="4" fill="#eee"/><path fill="none" stroke="#eee" d="M4 9c0 8 12 8 12 0M10 15v4M6 19.500h8"/></svg>
          <svg class="tray-ico" viewBox="0 0 20 20"><path fill="none" stroke="#ddd" d="M5 7h14v7H5zM3 2v4M6 2v4M1.500 6h6v2a3 3 0 0 1-6 0zM4.500 11v4M9 8l5 5M14 8l-5 5"/></svg>
          <svg class="tray-ico" viewBox="0 0 20 20"><path fill="none" stroke="#888" d="M2 18A16 16 0 0 1 18 2M5.500 18A12.500 12.500 0 0 1 18 5.500"/><path fill="none" stroke="#ddd" d="M9 18a9 9 0 0 1 6-6"/><circle cx="14" cy="17" r="1.500" fill="#ddd"/></svg>
          <svg class="tray-ico" viewBox="0 0 20 20"><path fill="none" stroke="#ddd" d="M2 7h3l5-4v14l-5-4H2zM13 7c1 2 1 4 0 6M16 4c2 4 2 8 0 12"/></svg>
          <div class="clock"><span>16:54</span><span>03/07/2024</span></div>
          <div class="notify">
            <svg class="ico20" viewBox="0 0 20 20"><path fill="#fff" d="M0 0h20v16H8l-3 4v-4H0z"/><path stroke="#333" d="M3 4h14M3 7h14M3 10h9"/></svg>
            <span class="notify-count">3</span>
          </div>
        </div>
      </div>

      <!-- notification over the page -->
      <div class="toast">
        <div class="toast-head">
          <svg class="ico20" viewBox="0 0 30 30"><path fill="none" stroke="#25d366" stroke-width="3" d="M3 27l2-7a12 12 0 1 1 5 5z"/><path fill="#25d366" d="M10 9c1-1 2-1 2.500 0l1 2.500-1 1.500c1 2 2.500 3 4 4l1.500-1.500 3 1.500c0 1.500-1 3-3 3-5 0-9-5-9-9 0-1 .5-1.500 1.500-2z"/></svg>
          <span class="toast-app">WhatsApp</span>
          <svg class="ico14 toast-x"><use href="#i-x"/></svg>
        </div>
        <div class="toast-body">
          <div class="toast-avatar">
            <svg viewBox="0 0 30 30"><circle cx="12" cy="9" r="6" fill="#8c8c8c"/><circle cx="23" cy="11" r="4.500" fill="#8c8c8c"/><path fill="#8c8c8c" d="M2 20c0-3 2-4 4-4h12c2 0 3 1 3 4 0 6-3 8-9 8s-10-2-10-8z"/><path fill="#8c8c8c" d="M23 17h3c2 0 3 1 3 3 0 4-2 7-7 7 1-2 2-6 1-10z"/></svg>
          </div>
          <div class="toast-text">
            <div class="toast-title">Kelas TI Malam (29)</div>
            <div class="toast-msg">~.: Yg udh presentasi nd perlu masuk lagi kan?</div>
          </div>
        </div>
        <div class="toast-reply">
          <div class="reply-box">Type a reply</div>
          <span class="reply-send">Send</span>
        </div>
      </div>
    </div>
  </body>
</html>
```

FILE: styles.css
```css
* {
  box-sizing: border-box;
}
html, body {
  height: 100%;
}
body {
  margin: 0;
  font-family: "Noto Sans", sans-serif;
  overflow: hidden;
}
ul {
  list-style: none;
  margin: 0;
  padding: 0;
}
svg {
  flex: none;
}
.defs {
  width: 0;
  height: 0;
  position: absolute;
}
.ico14 {
  width: 14px;
  height: 14px;
  color: #e8eaed;
}
.ico20 {
  width: 20px;
  height: 20px;
}
.shell {
  position: relative;
  width: 1920px;
  height: 1080px;
  display: flex;
  flex-direction: column;
  overflow: hidden;
}

/* tab strip */
.tabstrip {
  height: 50px;
  flex: none;
  background: #000;
  display: flex;
  align-items: flex-end;
  color: #e8eaed;
  font-size: 14.5px;
  letter-spacing: -0.3px;
}
.tab-menu {
  width: 34px;
  height: 34px;
  margin: 0 8px 8px 8px;
  border-radius: 10px;
  background: #2b2b2b;
  display: flex;
  align-items: center;
  justify-content: center;
}
.tab {
  width: 200px;
  height: 42px;
  padding: 0 0 8px 10px;
  display: flex;
  align-items: center;
  position: relative;
}
.tab::after {
  content: "";
  position: absolute;
  right: 3px;
  top: 7px;
  height: 20px;
  width: 1px;
  background: #5a5a5a;
}
.tab.active {
  background: #373737;
  border-radius: 12px 12px 0 0;
  width: 193px;
  margin-right: 7px;
  padding-left: 11px;
}
.tab.active::after {
  display: none;
}
.favicon {
  width: 20px;
  height: 20px;
  flex: none;
}
.letter-b {
  background: #7a1df3;
  color: #fff;
  border-radius: 3px;
  font-size: 16px;
  font-weight: 700;
  line-height: 20px;
  text-align: center;
  letter-spacing: 0;
}
.tab-title {
  width: 112px;
  margin-left: 9px;
  white-space: nowrap;
  overflow: hidden;
  mask-image: linear-gradient(to right, #000 85%, transparent);
}
.tab-short {
  width: 86px;
}
.rec {
  width: 17px;
  height: 17px;
  margin-left: 8px;
}
.tab-x {
  margin-left: 14px;
}
.tab-plus {
  width: 14px;
  height: 14px;
  margin: 0 0 18px 7px;
}
.win-ctrl {
  margin-left: auto;
  align-self: stretch;
  display: flex;
  align-items: center;
  gap: 43px;
  padding-right: 22px;
  padding-bottom: 2px;
}

/* toolbar */
.toolbar {
  height: 50px;
  flex: none;
  background: #373737;
  display: flex;
  align-items: center;
  padding-left: 17px;
  padding-right: 17px;
}
.nav-ico {
  width: 20px;
  height: 20px;
  margin-right: 26px;
}
.nav-ico:nth-child(3) {
  margin-right: 22px;
}
.omnibox {
  width: 1459px;
  height: 42px;
  margin-top: 8px;
  border-radius: 21px;
  background: #232427;
  display: flex;
  align-items: center;
  padding: 0 15px 0 6px;
  color: #b4b4b4;
  font-size: 17px;
  letter-spacing: -0.27px;
}
.omnibox b {
  color: #fff;
  font-weight: 400;
}
.info-btn {
  width: 30px;
  height: 30px;
  border-radius: 50%;
  background: #373737;
  display: flex;
  align-items: center;
  justify-content: center;
  margin-right: 10px;
}
.star {
  width: 20px;
  height: 20px;
  margin-left: auto;
}
.ext-new {
  width: 30px;
  margin-left: 21px;
  margin-top: 8px;
  display: flex;
  flex-direction: column;
  align-items: center;
}
.new-tag {
  background: #6e7072;
  color: #fff;
  font-size: 11px;
  border-radius: 5px;
  width: 30px;
  height: 16px;
  line-height: 16px;
  text-align: center;
  margin-top: -7px;
}
.ext-ico {
  width: 22px;
  height: 22px;
  margin-left: 23px;
  margin-top: 8px;
}
.ext-tr {
  margin-left: 20px;
}
.svg-g {
  font-size: 9px;
  fill: #fff;
  font-family: "Liberation Sans", sans-serif;
}
.svg-x {
  font-size: 8px;
  fill: #555;
  font-family: "Noto Sans CJK SC", sans-serif;
}
.svg-new {
  font-size: 6.5px;
  font-weight: 700;
  fill: #063;
}
.tool-sep {
  width: 1px;
  height: 22px;
  background: #111;
  margin-left: 21px;
  margin-top: 8px;
}
.tool-sep + .ext-ico {
  margin-left: 22px;
}
.avatar {
  width: 26px;
  height: 26px;
  margin-left: 22px;
  margin-top: 8px;
}
.avatar + .ext-ico {
  margin-left: 21px;
}

/* bookmarks */
.bookmarks {
  height: 50px;
  flex: none;
  background: #373737;
  display: flex;
  align-items: center;
  padding-left: 15px;
  padding-right: 18px;
  color: #e8eaed;
  font-size: 14.5px;
  letter-spacing: -0.3px;
}
.bm-ico {
  width: 20px;
  height: 20px;
  margin-right: 20px;
}
.bm-named {
  display: flex;
  align-items: center;
  gap: 8px;
  margin-right: 20px;
}
.bm-if {
  margin-right: 21px;
}
.bm-letter {
  width: 20px;
  height: 20px;
  margin-right: 20px;
  line-height: 20px;
  text-align: center;
  font-weight: 700;
  letter-spacing: 0;
}
.bm-w {
  color: #0ea36b;
  font-size: 17px;
}
.bm-w sup {
  font-size: 8px;
  color: #ccc;
  line-height: 0;
}
.bm-k {
  color: #1b93c9;
  font-size: 20px;
}
.bm-nine {
  background: #2a3140;
  color: #fff;
  font-size: 18px;
}
.bm-p {
  background: #fff;
  color: #8a3fa8;
  font-size: 14px;
  font-weight: 400;
}
.bm-r {
  background: #000;
  color: #fff;
  font-size: 14px;
}
.bm-c {
  background: linear-gradient(135deg, #20c4cb, #7d2ae8);
  color: #fff;
  border-radius: 50%;
  font-size: 14px;
}
.bm-globe {
  display: flex;
  align-items: center;
  gap: 7px;
  margin-right: 16px;
}
.bm-sep {
  width: 2px;
  height: 20px;
  background: #0c0c0c;
  margin-left: auto;
  margin-right: 21px;
}
.bm-all {
  display: flex;
  align-items: center;
  gap: 11px;
}

/* page */
.page {
  flex: 1;
  min-height: 0;
  display: flex;
  background: #fff;
  overflow: hidden;
}
.site {
  flex: 1;
  min-width: 0;
  min-height: 0;
  display: flex;
  flex-direction: column;
  color: #212529;
}
.navbar {
  height: 60px;
  background: #212529;
  flex: none;
  box-shadow: 0 8px 24px rgba(0, 0, 0, 0.2);
  position: relative;
  z-index: 2;
}
.brand {
  width: 316px;
  height: 60px;
  padding-left: 20px;
  background: #16191c;
  color: #fff;
  font-size: 19px;
  font-weight: 500;
  letter-spacing: -0.3px;
  line-height: 64px;
}
.site-body {
  flex: 1;
  min-height: 0;
  display: flex;
  position: relative;
  overflow: hidden;
}
.sidebar {
  width: 316px;
  flex: none;
  background: #f8f9fa;
  border-right: 1px solid #dcdddf;
  border-left: 1px solid #dcdddf;
  padding-top: 22px;
}
.side-nav li {
  height: 46px;
  padding-left: 20px;
  display: flex;
  align-items: center;
  color: #0d6efd;
  font-size: 17px;
  font-weight: 500;
  letter-spacing: -0.2px;
}
.side-ico {
  width: 20px;
  height: 20px;
  margin-right: 10px;
  fill: currentColor;
}
.side-heading {
  height: 24px;
  margin: 30px 20px 4px 20px;
  display: flex;
  align-items: center;
  justify-content: space-between;
  color: #6c757d;
  font-size: 15px;
  letter-spacing: -0.2px;
}
.side-line {
  border: 0;
  border-top: 1px solid #ced0d2;
  margin: 21px 0 20px;
}

/* main */
.main {
  flex: 1;
  min-width: 0;
  padding: 0 31px;
}
.head {
  height: 90px;
  padding-top: 23px;
  border-bottom: 1px solid #dee2e6;
  display: flex;
  justify-content: space-between;
}
h1, h2 {
  margin: 0;
  font-size: 39px;
  font-weight: 500;
  line-height: 48px;
  letter-spacing: -0.9px;
}
h2 {
  margin-top: 22px;
}
.head-btns {
  display: flex;
  gap: 10px;
  margin-top: 8px;
  height: 38px;
  color: #6c757d;
  font-size: 17px;
  letter-spacing: -0.35px;
}
.btn-group {
  display: flex;
  border: 1px solid #6c757d;
  border-radius: 5px;
}
.btn-line {
  padding: 0 10px;
  line-height: 36px;
}
.btn-line + .btn-line {
  border-left: 1px solid #6c757d;
}
.btn-week {
  width: 142px;
  border: 1px solid #6c757d;
  border-radius: 5px;
  padding: 0 10px;
  display: flex;
  align-items: center;
  gap: 5px;
  white-space: nowrap;
}
.caret {
  border: 5px solid transparent;
  border-top-color: #6c757d;
  border-bottom: 0;
  margin-left: 3px;
}
.btn-add {
  display: block;
  margin: 48px 0 0 20px;
  width: 100px;
  height: 47px;
  padding-top: 4px;
  border: 0;
  border-radius: 8px;
  background: #0d6efd;
  color: #fff;
  font: inherit;
  font-size: 19px;
  letter-spacing: -0.3px;
}
.tabs {
  margin-top: 20px;
  display: flex;
  height: 51px;
  font-size: 19px;
  letter-spacing: -0.25px;
  color: #0d6efd;
}
.tabs li {
  padding: 0 20px;
  line-height: 52px;
  border: 1px solid transparent;
  border-bottom: 0;
}
.tabs li.on {
  color: #212529;
  border-color: #dee2e6;
  border-radius: 8px 8px 0 0;
  width: 101px;
  text-align: center;
  padding: 0;
}
.produk {
  width: 100%;
  table-layout: fixed;
  border-collapse: collapse;
  font-size: 19px;
  letter-spacing: -0.15px;
  color: #212529;
}
.c1 {
  width: 190px;
}
.c2 {
  width: 425px;
}
.c3 {
  width: 175px;
}
.c4 {
  width: 224px;
}
.c5 {
  width: 170px;
}
.produk th {
  height: 51px;
  padding: 4px 10px 0;
  background: #cfe2ff;
  color: #000;
  font-weight: 600;
  text-align: left;
  border-bottom: 2px solid #a6b5cc;
}
.produk td {
  height: 68px;
  padding: 13px 10px 0;
  vertical-align: top;
  border-bottom: 1px solid #dee2e6;
  white-space: nowrap;
}
.produk tbody tr:nth-child(odd) td {
  background: #f2f2f2;
}
.produk td.foto {
  padding-top: 14px;
}
.broken {
  width: 20px;
  height: 20px;
  vertical-align: 2px;
  margin-right: -1px;
}
.produk button {
  height: 47px;
  border: 0;
  border-radius: 8px;
  font: inherit;
  letter-spacing: -0.15px;
  vertical-align: top;
}
.btn-del {
  width: 89px;
  background: #dc3545;
  color: #fff;
}
.btn-upd {
  width: 97px;
  background: #ffc107;
  color: #000;
}
.produk td:last-child {
  padding-top: 0;
}
.produk td:last-child button {
  margin-top: 10px;
}

.snip {
  position: absolute;
  left: 897px;
  top: 186px;
  width: 202px;
  height: 24px;
  padding-left: 33px;
  background: #f6fafd;
  color: #e3e7ea;
  font-size: 14.5px;
  line-height: 24px;
  letter-spacing: -0.2px;
}

/* scrollbar */
.scrollbar {
  width: 20px;
  flex: none;
  background: #f1f1f1;
  padding: 0 2px;
  display: flex;
  flex-direction: column;
  align-items: center;
}
.arrow-up {
  margin-top: 7px;
  border: 5px solid transparent;
  border-bottom: 5px solid #505050;
  border-top: 0;
}
.thumb {
  width: 16px;
  height: 648px;
  margin-top: 8px;
  background: #c1c1c1;
}
.arrow-down {
  margin-top: auto;
  margin-bottom: 7px;
  border: 5px solid transparent;
  border-top: 5px solid #505050;
  border-bottom: 0;
}

/* taskbar */
.taskbar {
  height: 50px;
  flex: none;
  background: #1c1c1c;
  display: flex;
  color: #fff;
}
.tb-start {
  width: 60px;
  display: flex;
  align-items: center;
  justify-content: center;
}
.tb-search {
  width: 360px;
  background: #3f3f3f;
  border-top: 1px solid #6a6a6a;
  border-left: 1px solid #5a5a5a;
  border-bottom: 1px solid #5a5a5a;
  display: flex;
  align-items: center;
  padding-left: 14px;
  color: #d6d6d6;
  font-size: 18.5px;
  letter-spacing: -0.35px;
  overflow: hidden;
}
.search-ico {
  width: 22px;
  height: 22px;
  margin-right: 14px;
}
.meerkat {
  width: 95px;
  height: 50px;
  margin-left: auto;
  flex: none;
}
.tb-apps {
  display: flex;
  padding-left: 3px;
}
.tb-app {
  width: 62px;
  height: 50px;
  display: flex;
  align-items: center;
  justify-content: center;
  position: relative;
}
.tb-app.run::after {
  content: "";
  position: absolute;
  left: 5px;
  right: 5px;
  bottom: 0;
  height: 3px;
  background: #a9a9a9;
}
.on-app {
  background: #333;
}
.on-app::after {
  content: "";
  position: absolute;
  left: 0;
  right: 0;
  bottom: 0;
  height: 3px;
  background: #a9a9a9;
}
.app-ico {
  width: 30px;
  height: 30px;
}
.tb-count {
  position: absolute;
  right: 4px;
  bottom: 2px;
  width: 22px;
  height: 22px;
  border-radius: 50%;
  border: 2px solid #9a9a9a;
  background: #2a2a2a;
  font-size: 12px;
  line-height: 18px;
  text-align: center;
  letter-spacing: -0.5px;
}
.tray {
  margin-left: auto;
  display: flex;
  align-items: center;
  font-size: 16.5px;
  letter-spacing: -0.3px;
  padding-right: 30px;
}
.tray-weather {
  position: relative;
  display: flex;
  align-items: center;
  gap: 8px;
  font-size: 18px;
  margin-right: 29px;
}
.cloud {
  width: 32px;
  height: 32px;
}
.weather-badge {
  position: absolute;
  left: 16px;
  top: 0;
  width: 15px;
  height: 15px;
  border-radius: 50%;
  background: #c4262e;
  font-size: 10px;
  line-height: 15px;
  text-align: center;
}
.tray-ico {
  width: 20px;
  height: 20px;
  margin-right: 10px;
}
.clock {
  display: flex;
  flex-direction: column;
  align-items: center;
  line-height: 22px;
  font-size: 15.5px;
  margin: 0 23px 0 1px;
}
.notify {
  position: relative;
  margin-top: -2px;
}
.notify-count {
  position: absolute;
  left: 9px;
  top: 10px;
  width: 20px;
  height: 20px;
  border-radius: 50%;
  border: 1px solid #9a9a9a;
  background: #333;
  font-size: 13px;
  font-weight: 700;
  line-height: 18px;
  text-align: center;
}

/* whatsapp notification */
.toast {
  position: absolute;
  left: 1445px;
  top: 786px;
  width: 455px;
  height: 228px;
  background:
    radial-gradient(180px 200px at 100% 100%, #50406a, transparent),
    radial-gradient(200px 300px at 30% 50%, #66463c, transparent),
    linear-gradient(90deg, #575757, #5a5346 62%, #575750);
  color: #fff;
  padding: 0 20px;
}
.toast-head {
  height: 66px;
  display: flex;
  align-items: center;
  font-size: 14.5px;
  letter-spacing: -0.2px;
}
.toast-app {
  margin-left: 10px;
}
.toast-x {
  margin-left: auto;
  margin-right: 9px;
  margin-top: -4px;
  color: #c4c4c4;
}
.toast-body {
  display: flex;
  height: 102px;
  align-items: flex-start;
}
.toast-avatar {
  width: 74px;
  height: 74px;
  border-radius: 50%;
  background: #4d4d4d;
  display: flex;
  align-items: center;
  justify-content: center;
}
.toast-avatar svg {
  width: 30px;
  height: 30px;
}
.toast-text {
  margin: -2px 0 0 22px;
  width: 325px;
  line-height: 25px;
}
.toast-title {
  font-weight: 600;
  font-size: 18px;
  letter-spacing: -0.3px;
}
.toast-msg {
  color: #b9b9b9;
  font-size: 18px;
  letter-spacing: -0.2px;
}
.toast-reply {
  display: flex;
  align-items: center;
}
.reply-box {
  width: 356px;
  height: 40px;
  border: 3px solid #8b8b8b;
  background: rgba(20, 20, 20, 0.5);
  color: #bdbdbd;
  padding-left: 12px;
  line-height: 33px;
  font-size: 17px;
  letter-spacing: -0.2px;
}
.reply-send {
  margin: 2px 0 0 21px;
  color: #a2a2a2;
  font-size: 16px;
}
```
